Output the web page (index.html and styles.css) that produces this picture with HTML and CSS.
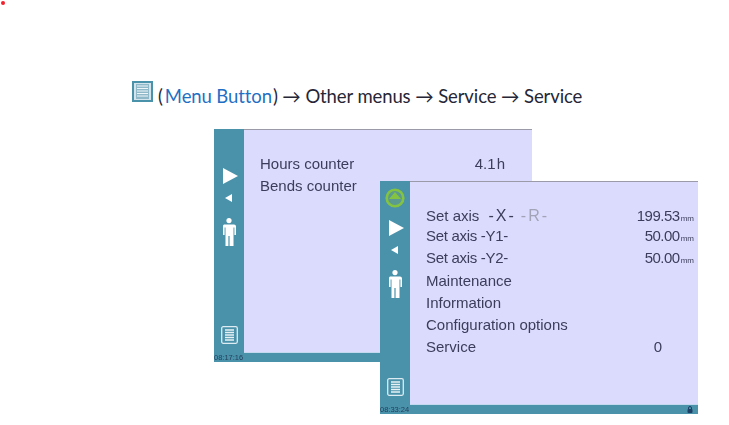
FILE: index.html
```html
<!DOCTYPE html>
<html lang="en">
<head>
    <meta charset="UTF-8">
    <meta name="viewport" content="width=device-width, initial-scale=1.0">
    <title>Service menu</title>
    <link rel="stylesheet" href="styles.css">
</head>
<body>
<span class="red-dot"></span>

<div class="caption">
    <svg class="caption-icon" viewBox="0 0 21 21">
        <rect x="1" y="1" width="19" height="19" fill="#d3e4ec" stroke="#4a92aa" stroke-width="2"/>
        <rect x="4" y="3" width="13" height="15" fill="#8fb9c9"/>
        <path d="M5 5h11M5 7.5h11M5 10h11M5 12.5h11M5 15h11" stroke="#eef6f9" stroke-width="1.2"/>
    </svg>
    <span>(<span class="link">Menu Button</span>) → Other menus → Service → Service</span>
</div>

<div class="screens">
    <div class="screen">
        <div class="side">
            <svg class="play" viewBox="0 0 15 16"><path d="M0 0L15 8L0 16Z"/></svg>
            <svg class="back" viewBox="0 0 7 8"><path d="M7 0L0 4L7 8Z"/></svg>
            <svg class="person" viewBox="0 0 14 28"><circle cx="7" cy="2.6" r="2.6"/><path d="M2 6.500h10a2 2 0 0 1 2 2V17h-1.600V9.500h-.9V28H7.600V18H6.400V28H3.500V9.500h-.9V17H1V8.500a2 2 0 0 1 1-2Z"/></svg>
            <svg class="menu-icon" viewBox="0 0 17 18">
                <rect x="0.700" y="0.700" width="15.600" height="16.600" rx="1.500" fill="none" stroke="#dcecf2" stroke-width="1.300"/>
                <path d="M4 4h9M4 6.500h9M4 9h9M4 11.500h9M4 14h9" stroke="#e8f2f6" stroke-width="1.300"/>
            </svg>
        </div>
        <div class="panel">
            <div class="row"><span class="label">Hours counter</span><span class="val-hours">4.1 h</span></div>
            <div class="row"><span class="label">Bends counter</span><span class="val-bends">0</span></div>
        </div>
        <div class="status"><span class="time">08:17:16</span></div>
    </div>

    <div class="screen screen-front">
        <div class="side side-clock">
            <svg class="clock" viewBox="0 0 20 20"><circle cx="10" cy="10" r="8.300" fill="#5a9a90" stroke="#84c341" stroke-width="2.600"/><path d="M4 11L10 4L16 11Z" fill="#84c341"/></svg>
            <svg class="play" viewBox="0 0 15 16"><path d="M0 0L15 8L0 16Z"/></svg>
            <svg class="back" viewBox="0 0 7 8"><path d="M7 0L0 4L7 8Z"/></svg>
            <svg class="person" viewBox="0 0 14 28"><circle cx="7" cy="2.600" r="2.600"/><path d="M2 6.500h10a2 2 0 0 1 2 2V17h-1.600V9.500h-.9V28H7.600V18H6.400V28H3.500V9.500h-.9V17H1V8.500a2 2 0 0 1 1-2Z"/></svg>
            <svg class="menu-icon" viewBox="0 0 17 18">
                <rect x="0.700" y="0.700" width="15.600" height="16.600" rx="1.500" fill="none" stroke="#dcecf2" stroke-width="1.300"/>
                <path d="M4 4h9M4 6.500h9M4 9h9M4 11.500h9M4 14h9" stroke="#e8f2f6" stroke-width="1.300"/>
            </svg>
        </div>
        <div class="panel panel-front">
            <div class="row row-short"><span class="label">Set axis <span class="axis-mark">-X-</span><span class="axis-mark faded">-R-</span></span><span class="value">199.53<small>mm</small></span></div>
            <div class="row"><span class="label label-tight">Set axis -Y1-</span><span class="value">50.00<small>mm</small></span></div>
            <div class="row row-tall"><span class="label label-tight">Set axis -Y2-</span><span class="value">50.00<small>mm</small></span></div>
            <div class="row"><span class="label">Maintenance</span></div>
            <div class="row"><span class="label">Information</span></div>
            <div class="row"><span class="label">Configuration options</span></div>
            <div class="row"><span class="label">Service</span><span class="val-zero">0</span></div>
        </div>
        <div class="status">
            <span class="time">08:33:24</span>
            <svg class="lock" viewBox="0 0 6 7"><path d="M1.500 3V2a1.500 1.500 0 0 1 3 0v1" fill="none" stroke="#1d3f66" stroke-width="1"/><rect x="0.500" y="3" width="5" height="4" rx="1" fill="#1d3f66"/></svg>
        </div>
    </div>
</div>
</body>
</html>
```

FILE: styles.css
```css
body {
    font-family: 'Liberation Sans', Arial, sans-serif;
    background-color: #fff;
    color: #3c3c5c;
    margin: 0;
    height: 425px;
    overflow: hidden;
}
.red-dot {
    position: absolute;
    left: 1px;
    top: 1px;
    width: 4px;
    height: 4px;
    border-radius: 50%;
    background-color: #f0202c;
}
.caption {
    display: flex;
    align-items: flex-start;
    gap: 5px;
    padding: 81px 0 0 132px;
    height: 129px;
    box-sizing: border-box;
    font-family: Lato, 'Open Sans', sans-serif;
    font-size: 18.5px;
    line-height: 30px;
    letter-spacing: -0.1px;
    color: #262636;
}
.caption-icon {
    width: 21px;
    height: 21px;
}
.link {
    color: #1f6fc4;
    margin: 0 1px 0 2px;
}
.screens {
    position: relative;
    margin-left: 214px;
    width: 484px;
    height: 285px;
}
.screen {
    display: grid;
    grid-template-columns: 30px 288px;
    grid-template-rows: 224px 9px;
    width: 318px;
    background-color: #4a92aa;
    filter: blur(0.35px);
}
.screen-front {
    position: absolute;
    left: 166px;
    top: 52px;
}
.side {
    display: flex;
    flex-direction: column;
    align-items: center;
    padding-top: 39px;
    box-sizing: border-box;
}
.side-clock {
    padding-top: 7px;
}
.side svg {
    flex: none;
    fill: #fff;
}
.clock {
    width: 20px;
    height: 20px;
    margin-bottom: 12px;
}
.play {
    width: 15px;
    height: 16px;
    margin-left: 2px;
}
.back {
    width: 7px;
    height: 8px;
    margin-top: 10px;
    margin-right: 2px;
}
.person {
    width: 14px;
    height: 28px;
    margin-top: 16px;
}
.menu-icon {
    width: 17px;
    height: 18px;
    margin-top: auto;
    margin-bottom: 9px;
}
.panel {
    background-color: #dbdbfd;
    border-top: 1px solid #9a9aa8;
    border-bottom: 1px solid #c4d8ee;
    padding: 23px 0 0 16px;
    box-sizing: border-box;
    font-size: 15px;
    line-height: 22px;
}
.row {
    display: flex;
    justify-content: flex-end;
    height: 22px;
}
.row-short {
    height: 20px;
}
.row-tall {
    height: 23px;
}
.label {
    margin-right: auto;
    white-space: nowrap;
}
.label-tight {
    letter-spacing: -0.3px;
}
.axis-mark {
    font-size: 16px;
    letter-spacing: 2px;
    margin-left: 5px;
}
.faded {
    color: #a3a3b8;
}
.val-hours {
    margin-right: 27px;
    word-spacing: -3px;
}
.val-bends {
    margin-right: 48px;
}
.value {
    margin-right: 4px;
    letter-spacing: -0.5px;
}
.value small {
    font-size: 8px;
    margin-left: 1px;
    letter-spacing: 0;
}
.val-zero {
    margin-right: 36px;
}
.status {
    grid-column: 1 / 3;
    display: flex;
    justify-content: space-between;
    align-items: center;
    font-size: 7.5px;
    line-height: 9px;
    color: #24405e;
}
.lock {
    width: 6px;
    height: 7px;
    margin-right: 5px;
}
```
